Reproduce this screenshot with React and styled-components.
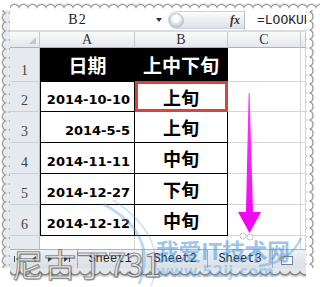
import styled, { createGlobalStyle } from "styled-components"

const GRID = "#d6d6d6"
const INK = "#000"
const COLS = { head: 30, a: 95, b: 93, c: 73 }

const rows = [
  { n: 2, date: "2014-10-10", part: "上旬", h: 30, selected: true },
  { n: 3, date: "2014-5-5", part: "上旬", h: 31 },
  { n: 4, date: "2014-11-11", part: "中旬", h: 31 },
  { n: 5, date: "2014-12-27", part: "下旬", h: 31 },
  { n: 6, date: "2014-12-12", part: "中旬", h: 31 },
]

const GlobalStyle = createGlobalStyle`
  html, body { margin: 0; padding: 0; background: #fff; }
  body { width: 320px; height: 287px; overflow: hidden; }
`

const Frame = styled.div`
  position: relative;
  width: 320px;
  height: 287px;
  display: grid;
  grid-template-columns: 10px 296px 14px;
  grid-template-rows: 10px 258px 19px;
  background: #fff;
  overflow: hidden;
`

const EdgeTop = styled.div`
  grid-column: 2 / 4;
  background: radial-gradient(circle at 4.5px 9.5px, #fff 0 4px, #8e8e8e 4.8px, rgba(150,150,150,.35) 5.8px, rgba(255,255,255,0) 6.8px) 0 0 / 9px 10px repeat-x;
`

const EdgeLeft = styled.div`
  background: radial-gradient(circle at 7.5px 4.5px, #e6eaef 0 4px, #8e8e8e 4.8px, rgba(150,150,150,.35) 5.8px, rgba(255,255,255,0) 6.8px) 0 3px / 10px 9px repeat-y;
`

const EdgeRight = styled.div`
  background: radial-gradient(circle at 2px 4.5px, #fff 0 4px, #8e8e8e 4.8px, rgba(150,150,150,.35) 5.8px, rgba(255,255,255,0) 6.8px) 0 2px / 14px 9px repeat-y;
`

const EdgeBottom = styled.div`
  grid-column: 2 / 3;
  background: radial-gradient(circle at 5px 1px, #e3e7ec 0 4.6px, #7a7a7a 5.6px, rgba(120,120,120,.4) 7px, rgba(255,255,255,0) 9px) 0 0 / 10px 19px repeat-x;
`

const Sheet = styled.div`
  width: 296px;
  min-width: 0;
  display: flex;
  flex-direction: column;
  min-height: 0;
  overflow: hidden;
`

const FormulaBar = styled.div`
  height: 20px;
  flex: none;
  display: flex;
  align-items: center;
  overflow: hidden;
  background: #fff;
  border-bottom: 2px solid #d9dde3;
  color: #222;
`

const NameBox = styled.div`
  flex: 0 0 135px;
  text-align: center;
  font: 14px "Liberation Serif", serif;
  letter-spacing: 1px;
`

const DropArrow = styled.div`
  margin-left: 11px;
  width: 0;
  height: 0;
  border-left: 3.5px solid transparent;
  border-right: 3.5px solid transparent;
  border-top: 4px solid #333;
`

const Pill = styled.div`
  margin-left: 6px;
  flex: 0 0 76px;
  height: 18px;
  box-sizing: border-box;
  display: flex;
  align-items: center;
  justify-content: space-between;
  border: 1px solid #cdd2d9;
  border-right: 0;
  border-radius: 9px 0 0 9px;
  background: linear-gradient(#fbfcfd, #dde1e7);
`

const Knob = styled.div`
  width: 15px;
  height: 15px;
  border-radius: 50%;
  background: radial-gradient(circle at 45% 35%, #fff 0 3px, #e4e7eb 5px, #c5cad1 8px);
  border: 1px solid #b9bfc8;
  box-sizing: border-box;
`

const Fx = styled.span`
  padding-right: 4px;
  font: italic bold 12px "Liberation Serif", serif;
  color: #333;
`

const FormulaText = styled.div`
  flex: 1;
  min-width: 0;
  height: 100%;
  display: flex;
  align-items: center;
  padding-left: 12px;
  border-left: 1px solid #b8bfc8;
  white-space: nowrap;
  overflow: hidden;
  font: 13px "Liberation Mono", monospace;
`

const HeadRow = styled.div`
  height: 16px;
  flex: none;
  display: flex;
  background: linear-gradient(#f9fafb, #e2e6eb);
`

const ColHead = styled.div`
  box-sizing: border-box;
  flex: ${p => (p.$w ? `0 0 ${p.$w}px` : "1 1 auto")};
  display: flex;
  align-items: ${p => (p.$corner ? "flex-end" : "center")};
  justify-content: ${p => (p.$corner ? "flex-end" : "center")};
  padding: ${p => (p.$corner ? "0 3px 3px 0" : "0")};
  border-right: 1px solid #c3c9d1;
  border-bottom: 1px solid #aab4c0;
  font: 14px "Liberation Serif", serif;
  color: #333;
`

const CornerMark = styled.div`
  width: 0;
  height: 0;
  border-left: 7px solid transparent;
  border-bottom: 7px solid #c2c8cf;
`

const Grid = styled.div`
  flex: 1;
  min-height: 0;
  overflow: hidden;
  display: flex;
  flex-direction: column;
`

const Row = styled.div`
  height: ${p => p.$h}px;
  flex: none;
  display: flex;
`

const RowHead = styled.div`
  box-sizing: border-box;
  flex: 0 0 ${COLS.head}px;
  display: flex;
  align-items: flex-end;
  justify-content: center;
  padding-bottom: 3px;
  background: #e6eaef;
  border-right: 1px solid #b1bac5;
  border-bottom: 1px solid #c9d0d8;
  font: 14px/15px "Liberation Serif", serif;
  color: #444;
`

const Cell = styled.div`
  position: relative;
  box-sizing: border-box;
  flex: ${p => (p.$w ? `0 0 ${p.$w}px` : "1 1 auto")};
  display: flex;
  align-items: ${p => (p.$mid ? "center" : "flex-end")};
  justify-content: ${p => p.$align || "flex-start"};
  background: ${p => (p.$dark ? "#000" : "#fff")};
  border-left: ${p => (p.$first ? `1px solid ${INK}` : "0")};
  border-right: 1px solid ${p => (p.$ink ? INK : GRID)};
  border-bottom: 1px solid ${p => (p.$ink ? INK : GRID)};

  ${p =>
    p.$selected &&
    `&::after {
      content: "";
      position: absolute;
      top: -1px; left: 0; right: -1px; bottom: -1px;
      border: 3px solid #d8433d;
      z-index: 2;
    }`}
`

const Title = styled.span`
  font: 700 19px/1 "Noto Sans CJK SC", sans-serif;
  color: #fff;
`

const DateText = styled.span`
  padding: 0 4px 4px 0;
  font: bold 13px/15px "DejaVu Sans", sans-serif;
  color: #000;
`

const Part = styled.span`
  font: 700 18px/1 "Noto Sans CJK SC", sans-serif;
  color: #000;
`

const TabBar = styled.div`
  height: 19px;
  flex: none;
  box-sizing: border-box;
  display: flex;
  align-items: center;
  border-top: 1px solid #a9b3bf;
  background: linear-gradient(#eef1f5, #dadfe6);
`

const NavGroup = styled.div`
  display: flex;
  align-items: center;
  height: 100%;
  border-right: 1px solid #9fa9b6;
  padding-right: 3px;
`

const NavBtn = styled.div`
  width: 16px;
  height: 100%;
  display: flex;
  align-items: center;
  justify-content: center;
  color: #3c4654;
`

const Tab = styled.div`
  flex: 0 0 65px;
  height: 100%;
  box-sizing: border-box;
  display: flex;
  align-items: center;
  justify-content: center;
  border-right: 1px solid #a5afbb;
  font: 12px "Liberation Mono", monospace;
  color: #222;
`

const AddSheet = styled.div`
  margin-left: 6px;
  display: flex;
  align-items: center;
`

const Arrow = styled.svg`
  position: absolute;
  left: 237px;
  top: 91px;
`

const Watermark = styled.div`
  position: absolute;
  left: 12px;
  top: 247px;
  font: 400 32px/1 "Noto Sans CJK SC", sans-serif;
  color: rgba(248, 248, 248, 0.7);
  -webkit-text-stroke: 1px rgba(70, 70, 70, 0.6);
  text-shadow: 1px 1px 1px rgba(0, 0, 0, 0.25);
  pointer-events: none;
`

const SiteMark = styled.div`
  position: absolute;
  left: 156px;
  top: 238px;
  display: flex;
  flex-direction: column;
  align-items: flex-start;
  pointer-events: none;
  color: rgba(60, 140, 215, 0.5);
  & b {
    font: 700 23px/1.05 "Noto Sans CJK SC", sans-serif;
    letter-spacing: -0.5px;
  }
  & i {
    margin-top: 3px;
    font: normal 700 15px/1 "DejaVu Sans", sans-serif;
    color: rgba(90, 160, 225, 0.42);
  }
`

const Swoosh = styled.svg`
  position: absolute;
  left: 95px;
  top: 198px;
  pointer-events: none;
`

function NavIcon({ dir, bar }) {
  const pts = dir === "left" ? "6,1 6,7 2,4" : "2,1 2,7 6,4"
  return (
    <svg width="8" height="8" viewBox="0 0 8 8">
      <polygon points={pts} fill="currentColor" />
      {bar && <rect x={dir === "left" ? 0 : 7} y="1" width="1" height="6" fill="currentColor" />}
    </svg>
  )
}

export default function App() {
  return (
    <>
      <GlobalStyle />
      <Frame>
        <div />
        <EdgeTop />

        <EdgeLeft />
        <Sheet>
          <FormulaBar>
            <NameBox>B2</NameBox>
            <DropArrow />
            <Pill>
              <Knob />
              <Fx>fx</Fx>
            </Pill>
            <FormulaText>{'=LOOKUP(DAY(A2),{1,11,21},{"上旬","中旬","下旬"})'}</FormulaText>
          </FormulaBar>

          <HeadRow>
            <ColHead $w={COLS.head} $corner>
              <CornerMark />
            </ColHead>
            <ColHead $w={COLS.a}>A</ColHead>
            <ColHead $w={COLS.b}>B</ColHead>
            <ColHead $w={COLS.c}>C</ColHead>
            <ColHead />
          </HeadRow>

          <Grid>
            <Row $h={34}>
              <RowHead>1</RowHead>
              <Cell $w={COLS.a} $dark $ink $first $mid $align="center">
                <Title>日期</Title>
              </Cell>
              <Cell $w={COLS.b} $dark $ink $mid $align="center">
                <Title>上中下旬</Title>
              </Cell>
              <Cell $w={COLS.c} />
              <Cell />
            </Row>
            {rows.map(r => (
              <Row key={r.n} $h={r.h}>
                <RowHead>{r.n}</RowHead>
                <Cell $w={COLS.a} $ink $first $align="flex-end">
                  <DateText>{r.date}</DateText>
                </Cell>
                <Cell $w={COLS.b} $ink $mid $align="center" $selected={r.selected}>
                  <Part>{r.part}</Part>
                </Cell>
                <Cell $w={COLS.c} />
                <Cell />
              </Row>
            ))}
            <Row $h={31}>
              <RowHead>7</RowHead>
              <Cell $w={COLS.a} />
              <Cell $w={COLS.b} />
              <Cell $w={COLS.c} />
              <Cell />
            </Row>
          </Grid>

          <TabBar>
            <NavGroup>
              <NavBtn><NavIcon dir="left" bar /></NavBtn>
              <NavBtn><NavIcon dir="left" /></NavBtn>
              <NavBtn><NavIcon dir="right" /></NavBtn>
              <NavBtn><NavIcon dir="right" bar /></NavBtn>
            </NavGroup>
            <Tab>Sheet1</Tab>
            <Tab>Sheet2</Tab>
            <Tab>Sheet3</Tab>
            <AddSheet>
              <svg width="14" height="11" viewBox="0 0 14 11">
                <rect x="2.5" y="2.5" width="11" height="8" fill="#fff" stroke="#6f7c8c" />
                <path d="M3 1 L4 3.2 L6.2 3.4 L4.5 4.8 L5 7 L3 5.8 L1 7 L1.5 4.8 L0 3.4 L2 3.2 Z" fill="#f0a030" />
              </svg>
            </AddSheet>
          </TabBar>
        </Sheet>
        <EdgeRight />

        <div />
        <EdgeBottom />
        <div />

        <Arrow width="26" height="146" viewBox="0 0 26 146">
          <defs>
            <linearGradient id="mag" x1="0" y1="0" x2="0" y2="1">
              <stop offset="0" stopColor="#ff3dff" />
              <stop offset="1" stopColor="#f000f0" />
            </linearGradient>
          </defs>
          <polygon points="11.6,2 12.6,2 16,121 24,121 12.5,142 1,121 9,121" fill="url(#mag)" />
        </Arrow>

        <Swoosh width="220" height="89" viewBox="0 0 220 89">
          <path d="M8 6 C 38 22, 60 46, 44 86" fill="none" stroke="rgba(90,160,225,0.4)" strokeWidth="3" />
          <path d="M18 2 C 52 24, 70 54, 56 88" fill="none" stroke="rgba(90,160,225,0.3)" strokeWidth="1.5" />
          <path d="M206 40 C 198 58, 182 66, 164 68" fill="none" stroke="rgba(90,160,225,0.45)" strokeWidth="2.5" />
          <circle cx="148" cy="38" r="3" fill="#fff" stroke="rgba(150,150,150,0.5)" />
          <circle cx="155" cy="39" r="3" fill="#fff" stroke="rgba(150,150,150,0.5)" />
        </Swoosh>

        <Watermark>尼古丁731</Watermark>
        <SiteMark>
          <b>我爱IT技术网</b>
          <i>www.52ij.com</i>
        </SiteMark>
      </Frame>
    </>
  )
}
